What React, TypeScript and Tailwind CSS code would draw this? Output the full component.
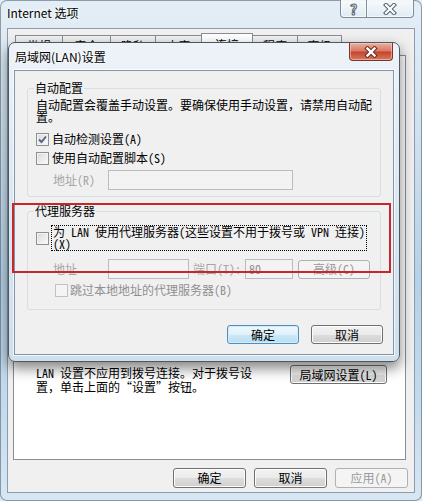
import React from "react";

const body = "font-['Noto_Sans_Mono_CJK_SC','Noto_Sans_CJK_SC',sans-serif]";
const ui = "font-['Noto_Sans_CJK_SC','Noto_Sans',sans-serif]";

type BtnProps = {
  children: React.ReactNode;
  variant?: "normal" | "def" | "disabled";
  className?: string;
};

function Btn({ children, variant = "normal", className = "" }: BtnProps) {
  const styles: Record<string, string> = {
    normal:
      "border-[#707070] bg-[linear-gradient(180deg,#f2f2f2_0%,#ebebeb_50%,#dddddd_51%,#cfcfcf_100%)] text-black shadow-[inset_0_0_0_1px_#fcfcfc]",
    def: "border-[#4f8fbd] bg-[linear-gradient(180deg,#eef7fc_0%,#e0f1fa_50%,#cbe8f7_51%,#b9dff2_100%)] text-black shadow-[inset_0_0_0_1px_#d3eefa]",
    disabled: "border-[#adb2b5] bg-[#f4f4f4] text-[#9a9a9a]",
  };
  return (
    <div
      className={`flex shrink-0 items-center justify-center rounded-[3px] border text-[12px] leading-[12px] ${styles[variant]} ${className}`}
    >
      {children}
    </div>
  );
}

function Check({ checked = false, disabled = false }: { checked?: boolean; disabled?: boolean }) {
  return (
    <span
      className={`relative flex h-[13px] w-[13px] shrink-0 items-center justify-center border ${
        disabled
          ? "border-[#c2c2c2] bg-[#f4f4f4]"
          : "border-[#8e8f8f] bg-[linear-gradient(135deg,#d6d8db_0%,#eceef0_60%,#fbfbfb_100%)] shadow-[inset_0_0_0_1px_#f4f4f4]"
      }`}
    >
      {checked && (
        <svg width="11" height="11" viewBox="0 0 11 11" className="absolute left-[0px] top-[0px]">
          <path d="M2 5.5 L4.5 8 L9 2.5" fill="none" stroke="#56647c" strokeWidth="1.9" />
        </svg>
      )}
    </span>
  );
}

function Input({ className = "", children }: { className?: string; children?: React.ReactNode }) {
  return (
    <div
      className={`flex shrink-0 items-center border border-[#b9bcc0] bg-[#f3f3f3] pl-[3px] text-[12px] leading-[12px] text-[#8d8d8d] ${className}`}
    >
      {children}
    </div>
  );
}

const tabs: [string, string, boolean][] = [
  ["常规", "w-[48px]", false],
  ["安全", "w-[49px]", false],
  ["隐私", "w-[46px]", false],
  ["内容", "w-[47px]", false],
  ["连接", "w-[52px]", true],
  ["程序", "w-[46px]", false],
  ["高级", "w-[45px]", false],
];

export default function App() {
  return (
    <div
      className={`relative h-[501px] w-[422px] overflow-hidden bg-[linear-gradient(180deg,#e4eef6_0%,#d4e4f0_22%,#b7d1e6_55%,#c3daec_80%,#d8e7f2_100%)] text-[12px] text-black ${body}`}
    >
      {/* Outer window: Internet 选项 */}
      <div className="flex h-full flex-col rounded-[7px] shadow-[inset_0_0_0_1px_rgba(70,90,110,0.55)]">
        <div className="flex h-[28px] shrink-0 items-start justify-between">
          <span className={`ml-[7px] mt-[5px] text-[12px] leading-[16px] text-black ${ui} [text-shadow:0_0_6px_#fff,0_0_3px_#fff]`}>
            Internet 选项
          </span>
          <div className="mr-[8px] flex">
            <div className="flex h-[18px] w-[27px] items-center justify-center rounded-bl-[4px] border border-t-0 border-[#7d8c9b] bg-[linear-gradient(180deg,rgba(255,255,255,0.75),rgba(220,234,245,0.55))] shadow-[inset_0_0_0_1px_rgba(255,255,255,0.6)]">
              <span className={`text-[14px] font-bold leading-[18px] text-white ${ui} [-webkit-text-stroke:1px_#55606c]`}>?</span>
            </div>
            <div className="flex h-[18px] w-[47px] items-center justify-center rounded-br-[4px] border border-l-0 border-t-0 border-[#7d8c9b] bg-[linear-gradient(180deg,rgba(255,255,255,0.75),rgba(220,234,245,0.55))] shadow-[inset_0_0_0_1px_rgba(255,255,255,0.6)]">
              <svg width="14" height="12" viewBox="0 0 14 12">
                <path d="M3 2 L11 10 M11 2 L3 10" stroke="#55606c" strokeWidth="4.2" strokeLinecap="square" />
                <path d="M3 2 L11 10 M11 2 L3 10" stroke="#ffffff" strokeWidth="2.2" strokeLinecap="square" />
              </svg>
            </div>
          </div>
        </div>

        <div className="mx-[7px] flex flex-1 flex-col border border-[#8a9cad] bg-[#f0f0f0]">
          {/* tabs */}
          <div className="mt-[4px] flex h-[23px] items-end pl-[7px]">
            {tabs.map(([label, w, sel]) => (
              <div
                key={label}
                className={`-mr-[1px] flex items-start justify-center border border-b-0 border-[#898c95] text-[12px] leading-[12px] ${w} ${
                  sel ? "relative h-[23px] bg-white pt-[5px]" : "h-[21px] bg-[linear-gradient(180deg,#f3f3f3,#dedede)] pt-[4px]"
                }`}
              >
                {label}
              </div>
            ))}
          </div>
          {/* tab panel */}
          <div className="-mt-[1px] ml-[5px] flex h-[405px] w-[393px] flex-col border border-[#898c95] bg-white">
            <div className="mt-[309px] flex items-start">
              <div className="ml-[22px] mt-[1px] whitespace-nowrap text-[12px] leading-[14px]">
                LAN 设置不应用到拨号连接。对于拨号设
                <br />
                置，单击上面的“设置”按钮。
              </div>
              <Btn className="ml-auto mr-[18px] h-[19px] w-[97px]">局域网设置(L)</Btn>
            </div>
          </div>
          {/* bottom buttons */}
          <div className="mt-[8px] flex justify-end gap-[8px] pr-[6px]">
            <Btn className="h-[20px] w-[73px]">确定</Btn>
            <Btn className="h-[20px] w-[73px]">取消</Btn>
            <Btn variant="disabled" className="h-[20px] w-[73px]">
              应用(A)
            </Btn>
          </div>
        </div>
        <div className="h-[8px] shrink-0" />
      </div>

      {/* LAN dialog */}
      <div className="absolute left-[8px] top-[42px] z-20 flex h-[320px] w-[392px] flex-col rounded-[7px] border border-[#4b5866] bg-[linear-gradient(180deg,#eef3f8_0%,#e0eaf3_35%,#cfdfec_100%)] shadow-[0_6px_14px_rgba(0,0,0,0.5)]">
        <div className="flex h-[27px] shrink-0 items-start justify-between">
          <span className={`ml-[6px] mt-[6px] text-[12px] leading-[16px] text-black ${ui} [text-shadow:0_0_6px_#fff,0_0_3px_#fff]`}>
            局域网(LAN)设置
          </span>
          <div className="mr-[6px] flex h-[18px] w-[44px] items-center justify-center rounded-b-[4px] border border-t-0 border-[#7a3429] bg-[linear-gradient(180deg,#eab0a2_0%,#d87a66_45%,#c4452e_55%,#d77a5f_100%)] shadow-[inset_0_0_0_1px_rgba(255,220,210,0.5)]">
            <svg width="14" height="12" viewBox="0 0 14 12">
              <path d="M3.5 2.5 L10.5 9.5 M10.5 2.5 L3.5 9.5" stroke="#6b2a20" strokeWidth="4.4" strokeLinecap="square" />
              <path d="M3.5 2.5 L10.5 9.5 M10.5 2.5 L3.5 9.5" stroke="#ffffff" strokeWidth="2.4" strokeLinecap="square" />
            </svg>
          </div>
        </div>

        <div className="mx-[5px] flex h-[285px] flex-col border border-[#8396a9] bg-[#f0f0f0] shadow-[0_0_0_1px_rgba(255,255,255,0.7)]">
          {/* 自动配置 */}
          <fieldset className="ml-[12px] mt-[10px] w-[354px] rounded-[3px] border border-[#d5dfe5] pb-[6px] pl-[8px]">
            <legend className="-ml-[2px] px-[1px] text-[12px] leading-[14px]">自动配置</legend>
            <div className="mt-[4px] text-[12px] leading-[12px]">
              自动配置会覆盖手动设置。要确保使用手动设置，请禁用自动配
              <br />
              置。
            </div>
            <div className="mt-[9px] flex h-[14px] items-center gap-[3px]">
              <Check checked />
              <span className="leading-[12px]">自动检测设置(A)</span>
            </div>
            <div className="mt-[5px] flex h-[14px] items-center gap-[3px]">
              <Check />
              <span className="leading-[12px]">使用自动配置脚本(S)</span>
            </div>
            <div className="mt-[5px] flex h-[20px] items-center">
              <span className="ml-[17px] w-[55px] leading-[12px] text-[#a6a6a6]">地址(R)</span>
              <Input className="h-[20px] w-[185px]" />
            </div>
          </fieldset>

          {/* 代理服务器 */}
          <fieldset className="ml-[12px] mt-[7px] w-[354px] rounded-[3px] border border-[#d5dfe5] pb-[12px] pl-[8px]">
            <legend className="-ml-[2px] px-[1px] text-[12px] leading-[14px]">代理服务器</legend>
            <div className="mt-[7px] flex h-[26px] items-center">
              <Check />
              <div className="ml-[2px] h-[26px] w-[316px] whitespace-nowrap border border-dotted border-black px-[1px] text-[12px] leading-[12px]">
                为 LAN 使用代理服务器(这些设置不用于拨号或 VPN 连接)
                <br />
                (X)
              </div>
            </div>
            <div className="mt-[8px] flex h-[20px] items-center">
              <span className="ml-[17px] w-[55px] leading-[12px] text-[#a6a6a6]">地址</span>
              <Input className="h-[20px] w-[81px]" />
              <span className="ml-[4px] leading-[12px] text-[#a6a6a6]">端口(T):</span>
              <Input className="ml-[4px] h-[20px] w-[48px]">80</Input>
              <Btn variant="disabled" className="ml-[5px] h-[19px] w-[72px]">
                高级(C)
              </Btn>
            </div>
            <div className="ml-[19px] mt-[4px] flex h-[14px] items-center gap-[2px]">
              <Check disabled />
              <span className="leading-[12px] text-[#8f8f8f]">跳过本地地址的代理服务器(B)</span>
            </div>
          </fieldset>

          <div className="mt-[15px] flex justify-end gap-[12px] pr-[10px]">
            <Btn variant="def" className="h-[19px] w-[72px]">
              确定
            </Btn>
            <Btn className="h-[19px] w-[72px]">取消</Btn>
          </div>
        </div>
      </div>

      {/* red annotation frame */}
      <div className="pointer-events-none absolute left-[12px] top-[203px] z-30 h-[70px] w-[379px] border-2 border-[#c9262b]" />
    </div>
  );
}
